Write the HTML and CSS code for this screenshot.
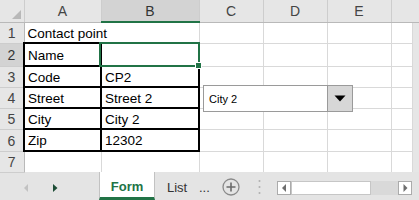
FILE: index.html
```html
<!DOCTYPE html>
<html>
<head>
<meta charset="utf-8">
<link rel="stylesheet" href="styles.css">
</head>
<body>
<div class="app">
  <div class="grid-wrap">
    <table class="sheet">
      <colgroup>
        <col class="c-hdr"><col class="c-a"><col class="c-b"><col class="c-c"><col class="c-d"><col class="c-e"><col class="c-f"><col class="c-gut">
      </colgroup>
      <tr class="r-head">
        <th class="corner"><span class="corner-tri"></span></th>
        <th>A</th>
        <th class="sel-col">B</th>
        <th>C</th>
        <th>D</th>
        <th>E</th>
        <th colspan="2" class="last-head"></th>
      </tr>
      <tr class="r1">
        <th class="rn">1</th>
        <td class="overflow">Contact point</td>
        <td></td><td></td><td></td><td></td><td></td><td class="gut"></td>
      </tr>
      <tr class="r2">
        <th class="rn sel-row">2</th>
        <td class="bx">Name</td>
        <td class="bx"></td>
        <td></td><td></td><td></td><td></td><td class="gut"></td>
      </tr>
      <tr class="r3">
        <th class="rn">3</th>
        <td class="bx">Code</td>
        <td class="bx">CP2</td>
        <td></td><td></td><td></td><td></td><td class="gut"></td>
      </tr>
      <tr class="r4">
        <th class="rn">4</th>
        <td class="bx">Street</td>
        <td class="bx">Street 2</td>
        <td></td><td></td><td></td><td></td><td class="gut"></td>
      </tr>
      <tr class="r5">
        <th class="rn">5</th>
        <td class="bx">City</td>
        <td class="bx">City 2</td>
        <td></td><td></td><td></td><td></td><td class="gut"></td>
      </tr>
      <tr class="r6">
        <th class="rn">6</th>
        <td class="bx">Zip</td>
        <td class="bx">12302</td>
        <td></td><td></td><td></td><td></td><td class="gut"></td>
      </tr>
      <tr class="r7">
        <th class="rn">7</th>
        <td></td><td></td><td></td><td></td><td></td><td></td><td class="gut"></td>
      </tr>
    </table>
    <div class="selection"><span class="fill-handle"></span></div>
    <div class="combo">
      <span class="combo-text">City 2</span>
      <span class="combo-btn">
        <svg width="12" height="7" viewBox="0 0 12 7"><polygon points="0.5,0.5 11.5,0.5 6,6.5" fill="#000"/></svg>
      </span>
    </div>
  </div>
  <div class="tabbar">
    <div class="nav">
      <svg class="nav-left" width="5" height="8" viewBox="0 0 5 8"><polygon points="4,0 4,8 0,4" fill="#c2c2c2"/></svg>
      <svg class="nav-right" width="5" height="8" viewBox="0 0 5 8"><polygon points="0,0 0,8 4.5,4" fill="#1d4d36"/></svg>
    </div>
    <div class="tab active">Form</div>
    <div class="tab">List</div>
    <div class="more">...</div>
    <div class="plus">
      <svg width="18" height="18" viewBox="0 0 18 18"><circle cx="9" cy="9" r="8" fill="none" stroke="#8a8a8a" stroke-width="1.3"/><path d="M9 4.5v9M4.5 9h9" stroke="#6a6a6a" stroke-width="1.6"/></svg>
    </div>
    <div class="sep">
      <svg width="3" height="18" viewBox="0 0 3 18"><circle cx="1.5" cy="3" r="1" fill="#b0b0b0"/><circle cx="1.5" cy="9" r="1" fill="#b0b0b0"/><circle cx="1.5" cy="15" r="1" fill="#b0b0b0"/></svg>
    </div>
    <div class="hscroll">
      <div class="sbtn">
        <svg width="5" height="8" viewBox="0 0 5 8"><polygon points="4,0 4,8 0,4" fill="#6e6e6e"/></svg>
      </div>
      <div class="thumb"></div>
      <div class="track"></div>
      <div class="sbtn">
        <svg width="5" height="8" viewBox="0 0 5 8"><polygon points="0.5,0 0.5,8 4.5,4" fill="#6e6e6e"/></svg>
      </div>
    </div>
  </div>
</div>
</body>
</html>
```

FILE: styles.css
```css
html, body {
  margin: 0;
  padding: 0;
  background: #fff;
}

.app {
  width: 419px;
  height: 200px;
  overflow: hidden;
  font-family: "Liberation Sans", Arial, sans-serif;
  display: flex;
  flex-direction: column;
}

.grid-wrap {
  position: relative;
  height: 172px;
  flex: none;
}

.sheet {
  border-collapse: collapse;
  table-layout: fixed;
  width: 419px;
}

.c-hdr { width: 24px; }
.c-a { width: 77px; }
.c-b { width: 98px; }
.c-c { width: 64px; }
.c-d { width: 64px; }
.c-e { width: 64px; }
.c-f { width: 21px; }
.c-gut { width: 7px; }

.r-head { height: 22px; }
.r1 { height: 21px; }
.r2 { height: 23px; }
.r3 { height: 21px; }
.r4 { height: 21px; }
.r5 { height: 21px; }
.r6 { height: 22px; }
.r7 { height: 21px; }

.sheet th {
  background: #e6e6e6;
  color: #444;
  font-weight: normal;
  font-size: 14px;
  text-align: center;
  vertical-align: middle;
  padding: 1px 0 0 0;
  border: 1px solid #cdcdcd;
  line-height: 1;
}

.r-head th {
  border-top: none;
  border-bottom: 1px solid #b9b9b9;
}

.sheet th.corner {
  position: relative;
  border-left: none;
}

.corner-tri {
  position: absolute;
  right: 3px;
  bottom: 3px;
  width: 0;
  height: 0;
  border-left: 9px solid transparent;
  border-bottom: 9px solid #b8b8b8;
}

.sheet th.sel-col {
  background: #d3d3d3;
  color: #333;
  border-bottom: 2px solid #217346;
}

.sheet th.last-head {
  border-right: none;
}

.sheet th.rn {
  border-left: none;
  border-right: 1px solid #b9b9b9;
}

.sheet th.sel-row {
  background: #d3d3d3;
  color: #333;
}

.sheet td {
  border: 1px solid #d9d9d9;
  padding: 2px 3px 0 3px;
  font-size: 13.5px;
  color: #000;
  white-space: nowrap;
  vertical-align: middle;
  line-height: 1;
}

.sheet td.overflow {
  overflow: visible;
  border-right-style: hidden;
}

.sheet td.bx {
  border: 2px solid #000;
}

.sheet td.gut {
  background: #e6e6e6;
  border: none;
  border-left: 1px solid #b9b9b9;
  padding: 0;
}

.sheet .r7 td {
  border-bottom: none;
}

.selection {
  position: absolute;
  left: 99px;
  top: 42px;
  width: 101px;
  height: 25px;
  box-sizing: border-box;
  border: 2px solid #217346;
  pointer-events: none;
}

.fill-handle {
  position: absolute;
  right: -4px;
  bottom: -4px;
  width: 5px;
  height: 5px;
  background: #217346;
  border: 1px solid #fff;
}

.combo {
  position: absolute;
  left: 203px;
  top: 85px;
  width: 150px;
  height: 27px;
  box-sizing: border-box;
  border: 1px solid #9a9a9a;
  background: #fff;
  display: flex;
  align-items: stretch;
}

.combo-text {
  flex: 1;
  display: flex;
  align-items: center;
  padding: 1px 0 0 5px;
  font-size: 11px;
  color: #000;
}

.combo-btn {
  width: 24px;
  background: #d7d7d7;
  border-left: 1px solid #9a9a9a;
  display: flex;
  align-items: center;
  justify-content: center;
}

.tabbar {
  height: 28px;
  flex: none;
  background: #e4e4e4;
  display: flex;
  align-items: stretch;
  font-size: 13px;
  color: #333;
}

.nav {
  width: 99px;
  display: flex;
  align-items: center;
  padding-top: 3px;
  box-sizing: border-box;
}

.nav-left { margin-left: 24px; }
.nav-right { margin-left: 24px; }

.tab {
  display: flex;
  align-items: center;
  padding-top: 3px;
  box-sizing: border-box;
}

.tab.active {
  width: 56px;
  justify-content: center;
  background: #fff;
  border-left: 1px solid #c2c2c2;
  border-right: 1px solid #c2c2c2;
  border-bottom: 3px solid #217346;
  padding-top: 3px;
  color: #217346;
  font-weight: bold;
}

.tab:not(.active) {
  width: 32px;
  padding-left: 12px;
}

.more {
  width: 25px;
  box-sizing: border-box;
  padding: 3px 0 0 12px;
  display: flex;
  align-items: center;
  letter-spacing: 0;
}

.plus {
  width: 38px;
  display: flex;
  align-items: center;
  justify-content: center;
  padding-top: 2px;
}

.sep {
  width: 18px;
  display: flex;
  align-items: center;
  justify-content: center;
  padding-top: 2px;
}

.hscroll {
  margin-left: 9px;
  width: 135px;
  height: 14px;
  align-self: center;
  margin-top: 4px;
  display: flex;
  background: #d9d9d9;
}

.sbtn {
  width: 14px;
  height: 14px;
  box-sizing: border-box;
  background: #fff;
  border: 1px solid #ababab;
  display: flex;
  align-items: center;
  justify-content: center;
}

.thumb {
  width: 80px;
  height: 14px;
  box-sizing: border-box;
  background: #fff;
  border: 1px solid #c6c6c6;
}

.track {
  flex: 1;
}
```
